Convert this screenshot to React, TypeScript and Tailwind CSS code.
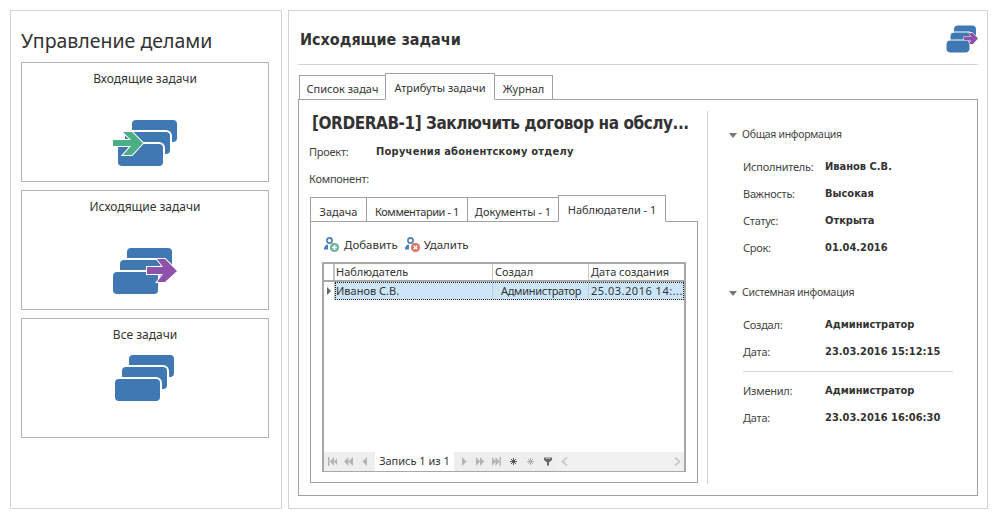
import React from "react";

const font = "font-['Noto_Sans','Open_Sans',sans-serif]";
const boldFont = "font-bold font-['DejaVu_Sans_Condensed','DejaVu_Sans',sans-serif]";

function Layer({ x, y }: { x: number; y: number }) {
  return (
    <>
      <rect x={x - 2} y={y - 2} width="49" height="26" rx="6" fill="#fff" />
      <rect x={x} y={y} width="45" height="22" rx="4" fill="#3f78b3" />
    </>
  );
}

function StackRects() {
  return (
    <>
      <rect x="14" y="0" width="45" height="22" rx="4" fill="#3f78b3" />
      <Layer x={7} y={12} />
      <Layer x={0} y={24} />
    </>
  );
}

function AllIcon() {
  return (
    <svg width="59" height="46" viewBox="0 0 59 46" className="block -ml-px">
      <StackRects />
    </svg>
  );
}

function InIcon() {
  return (
    <svg width="64" height="46" viewBox="-5 0 64 46" className="block">
      <StackRects />
      <path
        d="M-5 20H13L5 12H14L25 23 14 35H5L13 26H-5Z"
        fill="#4cae85"
        stroke="#fff"
        strokeWidth="2"
        paintOrder="stroke"
      />
    </svg>
  );
}

function OutIcon() {
  return (
    <svg width="64" height="46" viewBox="0 0 64 46" className="block">
      <StackRects />
      <path
        d="M34 19H50L44 11H52L64 23 52 34H44L50 26H34Z"
        fill="#8e52ab"
        stroke="#fff"
        strokeWidth="2"
        paintOrder="stroke"
      />
    </svg>
  );
}

function SmallOutIcon() {
  return (
    <svg width="33" height="29" viewBox="0 0 33 29" className="block">
      <rect x="8" y="0.5" width="22" height="12" rx="4" fill="#3f78b3" />
      <rect x="4" y="7" width="23" height="12" rx="4" fill="#3f78b3" stroke="#fff" strokeWidth="1" />
      <rect x="0" y="15" width="24" height="13" rx="4.5" fill="#3f78b3" stroke="#fff" strokeWidth="1" />
      <path d="M18 11.5H25L23 8H27L32 13.5 27 19H23L25 15.5H18Z" fill="#8e52ab" stroke="#fff" strokeWidth="1" paintOrder="stroke" />
    </svg>
  );
}

function Card({ title, mt, children }: { title: string; mt: string; children: React.ReactNode }) {
  return (
    <div className="h-[120px] border border-[#b4b4b4] flex flex-col items-center">
      <div className="mt-[7px] h-[18px] leading-[18px] text-[12px] text-[#333]">{title}</div>
      <div className={mt}>{children}</div>
    </div>
  );
}

function Tab({ label, active, w, lead = "leading-[27px]", track = "" }: { label: string; active?: boolean; w: string; lead?: string; track?: string }) {
  return (
    <div
      className={`${w} ${track} relative -ml-px first:ml-0 border border-[#a0a0a0] bg-white text-center text-[11px] text-[#333] whitespace-nowrap ${
        active ? "z-10 h-[27px] border-b-white leading-[27px]" : `h-[25px] ${lead}`
      }`}
    >
      {label}
    </div>
  );
}

function InfoRow({ k, v, h = "h-[27px]" }: { k: string; v: string; h?: string }) {
  return (
    <div className={`flex ${h} items-start`}>
      <div className="w-[82px] text-[11px] leading-[16px] text-[#444] pt-px tracking-[-0.25px]">{k}</div>
      <div className={`text-[11px] leading-[16px] pt-px text-[#333] ${boldFont}`}>{v}</div>
    </div>
  );
}

function Section({ title }: { title: string }) {
  return (
    <div className="flex items-center h-[16px] text-[10.5px] tracking-[-0.3px] text-[#444]">
      <svg width="8" height="5" viewBox="0 0 8 5" className="mr-[5px]">
        <path d="M0 0H8L4 5Z" fill="#777" />
      </svg>
      {title}
    </div>
  );
}

function Person({ color }: { color: string }) {
  return (
    <svg width="17" height="16" viewBox="0 0 17 16" className="block">
      <circle cx="6.5" cy="3.5" r="2.6" fill="none" stroke="#4a80b8" strokeWidth="1.6" />
      <path d="M1 12C1 9 3 7.5 5 7.5V12.5H1Z" fill="#4a80b8" />
      <path d="M9 6C11 6.5 12 7.5 12 8.5H9Z" fill="#4a80b8" />
      <circle cx="11.5" cy="10.5" r="4.6" fill={color} />
      {color === "#6fb59b" ? (
        <path d="M11.5 8V13M9 10.5H14" stroke="#fff" strokeWidth="1.6" />
      ) : (
        <path d="M9.7 8.7L13.3 12.3M13.3 8.7L9.7 12.3" stroke="#fff" strokeWidth="1.6" />
      )}
    </svg>
  );
}

function Tri({ d, w, fill = "#b4b4b4" }: { d: string; w: number; fill?: string }) {
  return (
    <svg width={w} height="9" viewBox={`0 0 ${w} 9`} className="block">
      <path d={d} fill={fill} />
    </svg>
  );
}

function Star({ color }: { color: string }) {
  return (
    <svg width="7" height="7" viewBox="0 0 7 7" className="block">
      <path d="M3.5 0V7M0 3.5H7M1 1L6 6M6 1L1 6" stroke={color} strokeWidth="1" />
    </svg>
  );
}

function Chevron({ right }: { right?: boolean }) {
  return (
    <svg width="7" height="9" viewBox="0 0 7 9" className="block">
      <path d={right ? "M1 0.5L5.5 4.5 1 8.5" : "M6 0.5L1.5 4.5 6 8.5"} fill="none" stroke="#c4c4c4" strokeWidth="1.6" />
    </svg>
  );
}

function NavBar() {
  return (
    <div className="h-[19px] flex items-center bg-[#eeeeee]">
      <div className="flex items-center pl-[4px] w-[51px]">
        <Tri w={9} d="M0 0H1.5V9H0ZM6 0V9L2 4.5ZM10 0V9L6 4.5Z" />
        <div className="ml-[7px]"><Tri w={9} d="M4.5 0V9L0 4.5ZM9 0V9L4.5 4.5Z" /></div>
        <div className="ml-[9px]"><Tri w={5} d="M5 0V9L0.5 4.5Z" /></div>
      </div>
      <div className="w-[79px] h-full bg-white text-center text-[11px] leading-[17px] text-[#333]">Запись 1 из 1</div>
      <div className="flex items-center pl-[8px]">
        <Tri w={5} d="M0 0V9L4.5 4.5Z" />
        <div className="ml-[9px]"><Tri w={8} d="M0 0V9L4 4.5ZM4 0V9L8 4.5Z" /></div>
        <div className="ml-[8px]"><Tri w={9} d="M0 0V9L4 4.5ZM3.5 0V9L7.5 4.5ZM7.5 0H9V9H7.5Z" /></div>
        <div className="ml-[9px]"><Star color="#555" /></div>
        <div className="ml-[10px]"><Star color="#b0b0b0" /></div>
        <div className="ml-[10px]">
          <Tri w={8} fill="#666" d="M0 0.5H8V3L5 5.5V8.5H3V5.5L0 3ZM1.5 1.5V2H6.5V1.5Z" />
        </div>
      </div>
      <div className="flex-1 h-full bg-[#f0f0f0] ml-[4px] flex items-center justify-between pl-[5px] pr-[3px]">
        <Chevron />
        <Chevron right />
      </div>
    </div>
  );
}

function Grid() {
  const cell = "text-[11px] text-[#333] whitespace-nowrap";
  return (
    <div className="h-[210px] w-[364px] border border-[#a8a8a8] border-t-2 border-x-2 border-b flex flex-col bg-white">
      <div className="flex h-[18px] border-b-2 border-[#a8a8a8]">
        <div className="w-[11px] border-r-2 border-[#c0c0c0]" />
        <div className={`${cell} leading-[16px] w-[158px] pl-[1px] border-r border-[#c8c8c8]`}>Наблюдатель</div>
        <div className={`${cell} leading-[16px] w-[96px] pl-[2px] border-r border-[#c8c8c8]`}>Создал</div>
        <div className={`${cell} leading-[16px] flex-1 pl-[2px]`}>Дата создания</div>
      </div>
      <div className="flex h-[18px]">
        <div className="w-[11px] flex items-center justify-center border-r border-[#c0c0c0]">
          <svg width="4" height="8" viewBox="0 0 4 8"><path d="M0 0L4 4 0 8Z" fill="#666" /></svg>
        </div>
        <div className="flex-1 flex bg-[#cde5f8] border border-dotted border-[#222]">
          <div className={`${cell} leading-[16px] w-[157px] border-r border-[#c8c8c8]`}>Иванов С.В.</div>
          <div className={`${cell} leading-[16px] w-[96px] pl-[8px] border-r border-[#c8c8c8] tracking-[-0.3px]`}>Администратор</div>
          <div className={`${cell} leading-[16px] flex-1 pl-[2px] tracking-[0.5px]`}>25.03.2016 14:...</div>
        </div>
      </div>
      <div className="flex-1" />
      <NavBar />
    </div>
  );
}

export default function App() {
  return (
    <div className={`${font} w-[998px] h-[519px] bg-white p-[10px] flex gap-[6px]`}>
      <div className="w-[272px] h-[499px] border border-[#d4d4d4] px-[10px]">
        <div className="mt-[15px] h-[36px] leading-[30px] text-[19.5px] text-[#333]">Управление делами</div>
        <div className="flex flex-col gap-[8px] w-[248px]">
          <Card title="Входящие задачи" mt="mt-[32px]"><InIcon /></Card>
          <Card title="Исходящие задачи" mt="mt-[32px]"><OutIcon /></Card>
          <Card title="Все задачи" mt="mt-[11px]"><AllIcon /></Card>
        </div>
      </div>

      <div className="w-[700px] h-[499px] border border-[#d4d4d4] px-[9px]">
        <div className="h-[53px] border-b border-[#d4d4d4] flex items-center justify-between mt-px">
          <div className={`ml-[2px] mt-[3px] text-[16px] leading-[20px] text-[#333] ${boldFont}`}>Исходящие задачи</div>
          <div className="mr-[-1px] mb-[-3px]"><SmallOutIcon /></div>
        </div>

        <div className="mt-[9px] flex items-end pl-px h-[26px] -mb-px relative z-10">
          <Tab label="Список задач" w="w-[87px]" lead="leading-[25px]" />
          <Tab label="Атрибуты задачи" w="w-[110px]" active />
          <Tab label="Журнал" w="w-[59px]" lead="leading-[25px]" />
        </div>

        <div className="w-[680px] h-[397px] border border-[#a0a0a0] flex pt-[11px] pb-[11px]">
          <div className="w-[408px] pl-[10px] pr-[8px] shrink-0">
            <div className={`pl-[3px] h-[26px] text-[17px] leading-[24px] text-[#333] tracking-[-0.45px] whitespace-nowrap ${boldFont}`}>[ORDERAB-1] Заключить договор на обслу...</div>
            <div className="flex h-[27px] mt-[7px] text-[11px] leading-[16px] text-[#444] tracking-[-0.25px]">
              <div className="w-[67px]">Проект:</div>
              <div className={`text-[#333] text-[11px] tracking-[0.25px] ${boldFont}`}>Поручения абонентскому отделу</div>
            </div>
            <div className="h-[16px] text-[11px] leading-[16px] text-[#444] tracking-[-0.25px]">Компонент:</div>

            <div className="mt-[8px] ml-px flex items-end h-[27px] -mb-px relative z-10">
              <Tab label="Задача" w="w-[57px]" />
              <Tab label="Комментарии - 1" w="w-[102px]" track="tracking-[-0.4px]" />
              <Tab label="Документы - 1" w="w-[92px]" />
              <Tab label="Наблюдатели - 1" w="w-[108px]" active />
            </div>
            <div className="ml-px w-[388px] h-[262px] border border-[#a0a0a0] pl-[11px] pt-[14px]">
              <div className="flex items-center h-[18px] text-[11.5px] text-[#333]">
                <span className="ml-[1px]"><Person color="#6fb59b" /></span>
                <span className="ml-[4px]">Добавить</span>
                <span className="ml-[6px]"><Person color="#e0705f" /></span>
                <span className="ml-[3px]">Удалить</span>
              </div>
              <div className="mt-[8px]"><Grid /></div>
            </div>
          </div>
          <div className="flex-1 border-l border-[#d4d4d4] pl-[21px] pt-[16px]">
            <Section title="Общая информация" />
            <div className="pl-[14px] mt-[15px]">
              <InfoRow k="Исполнитель:" v="Иванов С.В." />
              <InfoRow k="Важность:" v="Высокая" />
              <InfoRow k="Статус:" v="Открыта" />
              <InfoRow k="Срок:" v="01.04.2016" />
            </div>
            <div className="mt-[19px]"><Section title="Системная инфомация" /></div>
            <div className="pl-[14px] mt-[15px]">
              <InfoRow k="Создал:" v="Администратор" />
              <InfoRow k="Дата:" v="23.03.2016 15:12:15" h="h-[28px]" />
              <div className="w-[210px] border-t border-[#d4d4d4] mb-[10px]" />
              <InfoRow k="Изменил:" v="Администратор" />
              <InfoRow k="Дата:" v="23.03.2016 16:06:30" />
            </div>
          </div>
        </div>
      </div>
    </div>
  );
}
